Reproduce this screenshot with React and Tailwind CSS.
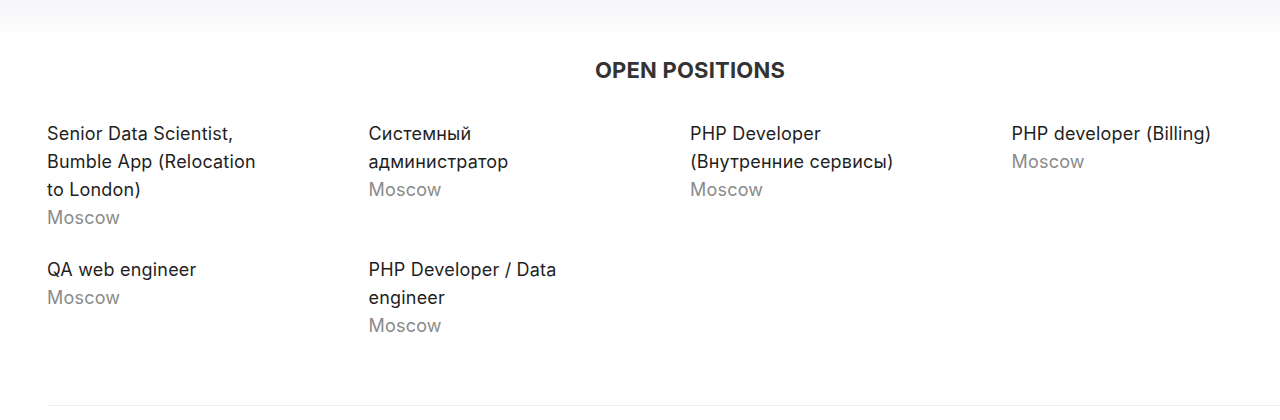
export default function App() {
  const rows = [
    [
      { t: "Senior Data Scientist, Bumble App (Relocation to London)" },
      { t: "Системный администратор" },
      { t: "PHP Developer (Внутренние сервисы)" },
      { t: "PHP developer (Billing)" },
    ],
    [{ t: "QA web engineer" }, { t: "PHP Developer / Data engineer" }],
  ];
  return (
    <div
      className="w-[1280px] h-[420px] overflow-hidden bg-white text-[#1f1f1f]"
      style={{ fontFamily: '"Inter", "Noto Sans", sans-serif' }}
    >
      <div className="h-10 bg-gradient-to-b from-[#f6f6f9] to-white" />
      <div className="ml-[47px] w-[1286px]">
        <h2 className="pt-4 text-center text-[22px] leading-[28px] font-bold text-[#333333] tracking-[0.2px]">
          OPEN POSITIONS
        </h2>
        <div className="mt-[36px] flex flex-col gap-6">
          {rows.map((row, i) => (
            <div key={i} className="grid grid-cols-4">
              {row.map((item, j) => (
                <div key={j} className="text-[18px] leading-[28px] tracking-[0.2px]">
                  <div className="max-w-[225px]">{item.t}</div>
                  <div className="text-[#8a8a8a]">Moscow</div>
                </div>
              ))}
            </div>
          ))}
        </div>
        <div className="mt-[65px] h-px bg-[#eef0f0]" />
      </div>
    </div>
  );
}
